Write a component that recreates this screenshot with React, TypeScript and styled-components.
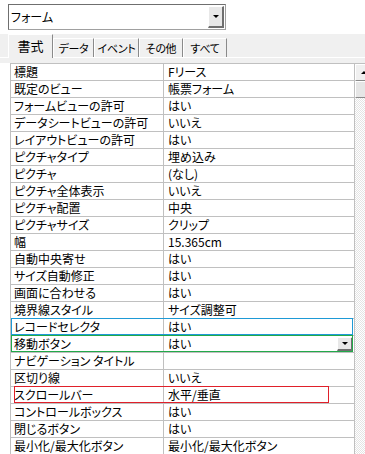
import React from 'react';
import styled, { createGlobalStyle } from 'styled-components';

type Mark = { color: string; left: number; width: number };

type Prop = {
  name: string;
  value: string;
  mark?: Mark;
  dropdown?: boolean;
};

const props: Prop[] = [
  { name: '標題', value: 'Fリース' },
  { name: '既定のビュー', value: '帳票フォーム' },
  { name: 'フォームビューの許可', value: 'はい' },
  { name: 'データシートビューの許可', value: 'いいえ' },
  { name: 'レイアウトビューの許可', value: 'はい' },
  { name: 'ピクチャタイプ', value: '埋め込み' },
  { name: 'ピクチャ', value: '(なし)' },
  { name: 'ピクチャ全体表示', value: 'いいえ' },
  { name: 'ピクチャ配置', value: '中央' },
  { name: 'ピクチャサイズ', value: 'クリップ' },
  { name: '幅', value: '15.365cm' },
  { name: '自動中央寄せ', value: 'はい' },
  { name: 'サイズ自動修正', value: 'はい' },
  { name: '画面に合わせる', value: 'はい' },
  { name: '境界線スタイル', value: 'サイズ調整可' },
  { name: 'レコードセレクタ', value: 'はい', mark: { color: '#1e9ad6', left: 0, width: 342 } },
  { name: '移動ボタン', value: 'はい', dropdown: true, mark: { color: '#22a94a', left: 0, width: 342 } },
  { name: 'ナビゲーション タイトル', value: '' },
  { name: '区切り線', value: 'いいえ' },
  { name: 'スクロールバー', value: '水平/垂直', mark: { color: '#e0202a', left: 3, width: 315 } },
  { name: 'コントロールボックス', value: 'はい' },
  { name: '閉じるボタン', value: 'はい' },
  { name: '最小化/最大化ボタン', value: '最小化/最大化ボタン' },
];

const tabs = [
  { label: '書式', width: 45 },
  { label: 'データ', width: 41 },
  { label: 'イベント', width: 45 },
  { label: 'その他', width: 44 },
  { label: 'すべて', width: 44 },
];

const GlobalStyle = createGlobalStyle`
  html, body {
    margin: 0;
    padding: 0;
    background: #fff;
  }
  body {
    font-family: "Noto Sans CJK JP", "Noto Sans", sans-serif;
    font-size: 12px;
    color: #000;
    font-feature-settings: "palt";
  }
`;

const Page = styled.div`
  width: 365px;
  height: 454px;
  overflow: hidden;
  padding-top: 4px;
  box-sizing: border-box;
`;

const ComboRow = styled.div`
  padding-left: 8px;
  height: 30px;
`;

const Combo = styled.div`
  width: 218px;
  height: 26px;
  box-sizing: border-box;
  display: flex;
  align-items: center;
  border: 1px solid #a0a0a0;
  border-top-color: #6f6f6f;
  border-left-color: #6f6f6f;
  background: #fff;
`;

const ComboText = styled.span`
  flex: 1;
  padding-left: 2px;
  line-height: 16px;
`;

const DropButton = styled.div<{ $h: number }>`
  width: 16px;
  height: ${p => p.$h}px;
  box-sizing: border-box;
  margin-right: 1px;
  display: flex;
  align-items: center;
  justify-content: center;
  background: #e8e8e8;
  border-top: 1px solid #fff;
  border-left: 1px solid #fff;
  border-right: 2px solid #6f6f6f;
  border-bottom: 2px solid #6f6f6f;
`;

const Arrow = styled.span`
  width: 0;
  height: 0;
  border-left: 3px solid transparent;
  border-right: 3px solid transparent;
  border-top: 3px solid #000;
`;

const TabBand = styled.div`
  height: 23px;
  background: #f0f0f0;
  padding-left: 8px;
  display: flex;
  align-items: flex-end;
`;

const Tab = styled.div<{ $w: number; $active?: boolean }>`
  width: ${p => p.$w}px;
  height: ${p => (p.$active ? 24 : 19)}px;
  margin-bottom: ${p => (p.$active ? -1 : 0)}px;
  box-sizing: border-box;
  position: relative;
  z-index: ${p => (p.$active ? 1 : 0)};
  display: flex;
  align-items: center;
  justify-content: center;
  background: #f0f0f0;
  border-top: 1px solid #fff;
  border-left: 1px solid #fff;
  border-right: 1px solid #8a8a8a;
  font-size: ${p => (p.$active ? 13 : 11)}px;
  letter-spacing: ${p => (p.$active ? 0 : -0.3)}px;
  padding-bottom: ${p => (p.$active ? 3 : 0)}px;
  white-space: nowrap;
`;

const PanelTop = styled.div`
  height: 6px;
  background: #f0f0f0;
  border-top: 1px solid #fff;
  box-sizing: border-box;
`;

const Body = styled.div`
  display: flex;
  padding-left: 10px;
`;

const Table = styled.div`
  width: 345px;
  box-sizing: border-box;
  border-top: 1px solid #c0c0c0;
  border-left: 1px solid #c0c0c0;
  flex: none;
`;

const Row = styled.div`
  display: grid;
  grid-template-columns: 153px 191px;
  height: 17px;
  position: relative;
`;

const Cell = styled.div<{ $pad: number }>`
  box-sizing: border-box;
  border-right: 1px solid #c0c0c0;
  border-bottom: 1px solid #c0c0c0;
  padding-left: ${p => p.$pad}px;
  line-height: 16px;
  white-space: nowrap;
  overflow: hidden;
  display: flex;
  align-items: center;
`;

const CellText = styled.span`
  flex: 1;
`;

const Outline = styled.div<{ $color: string; $left: number; $width: number }>`
  position: absolute;
  top: -1px;
  left: ${p => p.$left}px;
  width: ${p => p.$width}px;
  height: 17px;
  box-sizing: border-box;
  border: 1px solid ${p => p.$color};
  pointer-events: none;
`;

const Scroll = styled.div`
  width: 17px;
  flex: none;
  display: flex;
  flex-direction: column;
  border-top: 1px solid #c0c0c0;
`;

const ScrollButton = styled.div`
  height: 17px;
  box-sizing: border-box;
  background: #f0f0f0;
  border-top: 1px solid #fff;
  border-left: 1px solid #fff;
  border-bottom: 1px solid #8a8a8a;
  display: flex;
  align-items: center;
  padding-left: 5px;
`;

const UpArrow = styled.span`
  width: 0;
  height: 0;
  border-left: 3px solid transparent;
  border-right: 3px solid transparent;
  border-bottom: 3px solid #000;
`;

const Thumb = styled.div`
  height: 17px;
  box-sizing: border-box;
  background: #e6e6e6;
  border-top: 1px solid #fff;
  border-left: 1px solid #fff;
  border-bottom: 1px solid #8a8a8a;
`;

const Track = styled.div`
  flex: 1;
  background: repeating-conic-gradient(#e4e4e4 0 25%, #fff 0 50%) 0 0 / 2px 2px;
`;

export default function App() {
  return (
    <Page>
      <GlobalStyle />
      <ComboRow>
        <Combo>
          <ComboText>フォーム</ComboText>
          <DropButton $h={22}>
            <Arrow />
          </DropButton>
        </Combo>
      </ComboRow>
      <TabBand>
        {tabs.map((t, i) => (
          <Tab key={t.label} $w={t.width} $active={i === 0}>
            {t.label}
          </Tab>
        ))}
      </TabBand>
      <PanelTop />
      <Body>
        <Table>
          {props.map(p => (
            <Row key={p.name}>
              <Cell $pad={3}>
                <CellText>{p.name}</CellText>
              </Cell>
              <Cell $pad={4}>
                <CellText>{p.value}</CellText>
                {p.dropdown && (
                  <DropButton $h={14}>
                    <Arrow />
                  </DropButton>
                )}
              </Cell>
              {p.mark && <Outline $color={p.mark.color} $left={p.mark.left} $width={p.mark.width} />}
            </Row>
          ))}
        </Table>
        <Scroll>
          <ScrollButton>
            <UpArrow />
          </ScrollButton>
          <Thumb />
          <Track />
        </Scroll>
      </Body>
    </Page>
  );
}
